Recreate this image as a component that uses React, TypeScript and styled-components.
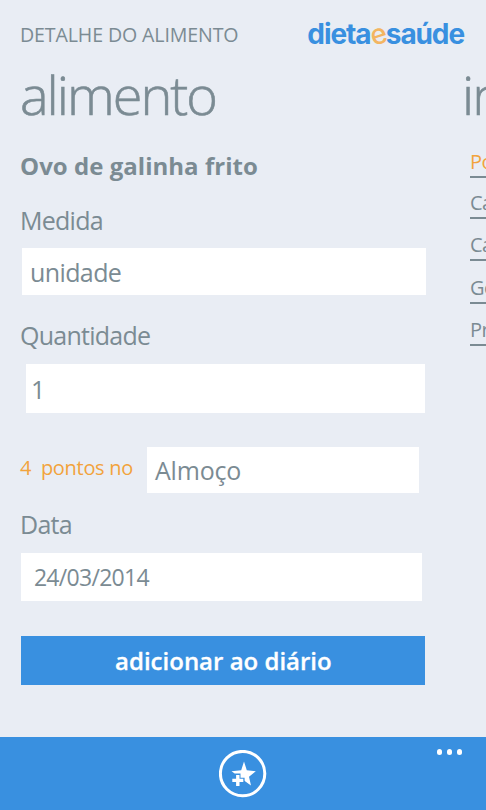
import React from "react";
import styled, { createGlobalStyle } from "styled-components";

const slate = "#7b8b93";
const blue = "#3990e0";
const orange = "#f2a33c";

const GlobalStyle = createGlobalStyle`
  * { box-sizing: border-box; }
  body { margin: 0; background: #e9edf4; }
`;

const Screen = styled.div`
  width: 486px;
  height: 810px;
  display: flex;
  flex-direction: column;
  overflow: hidden;
  background: #e9edf4;
  color: ${slate};
  font-family: "Open Sans", "Noto Sans", sans-serif;
  white-space: nowrap;
`;

const Header = styled.header`
  flex: none;
  height: 70px;
  padding: 0 22px 0 20px;
  display: flex;
  justify-content: space-between;
`;

const PageName = styled.span`
  font-size: 19.6px;
  line-height: 70px;
  letter-spacing: -0.13px;
`;

const Logo = styled.div`
  font-family: Inter, sans-serif;
  font-weight: 700;
  font-size: 28px;
  line-height: 68px;
  letter-spacing: -1.1px;
  color: ${blue};
`;

const LogoAccent = styled.span`
  display: inline-block;
  line-height: 1;
  font-weight: 500;
  transform: rotate(-18deg);
  color: #f3b562;
`;

const Panorama = styled.main`
  flex: 1;
  min-height: 0;
  display: flex;
`;

const Panel = styled.section<{ $width: number; $inset?: number }>`
  flex: none;
  width: ${(p) => p.$width}px;
  padding-left: ${(p) => p.$inset ?? 0}px;
`;

const PanelTitle = styled.h1`
  margin: 0;
  font-size: 54px;
  font-weight: 300;
  line-height: 48px;
  letter-spacing: -2px;
  -webkit-text-stroke: 0.6px ${slate};
`;

const FoodName = styled.h2`
  margin: 18px 0 0;
  font-size: 24px;
  font-weight: 700;
  line-height: 60px;
  letter-spacing: 0.03px;
`;

const Label = styled.label<{ $top?: number }>`
  display: block;
  margin-top: ${(p) => p.$top ?? 0}px;
  font-size: 25px;
  line-height: 49px;
  height: 48px;
  letter-spacing: -0.75px;
`;

const Field = styled.div<{
  $width: number;
  $height: number;
  $top?: number;
  $left?: number;
  $pad: number;
  $size?: number;
  $spacing?: number;
}>`
  flex: none;
  width: ${(p) => p.$width}px;
  height: ${(p) => p.$height}px;
  margin: ${(p) => p.$top ?? 0}px 0 0 ${(p) => p.$left ?? 0}px;
  padding-left: ${(p) => p.$pad}px;
  background: #fff;
  font-size: ${(p) => p.$size ?? 25}px;
  line-height: ${(p) => p.$height + 1}px;
  letter-spacing: ${(p) => p.$spacing ?? 0}px;
`;

const MealRow = styled.div`
  display: flex;
  margin-top: 34px;
`;

const Points = styled.div`
  width: 127px;
  font-size: 20px;
  line-height: 42px;
  letter-spacing: -0.3px;
  color: ${orange};
  white-space: pre;
`;

const AddButton = styled.button`
  display: block;
  width: 404px;
  height: 49px;
  margin: 35px 0 0 1.4px;
  padding: 0;
  border: 0;
  background: ${blue};
  color: #fff;
  font: 600 24px/49px "Open Sans", "Noto Sans", sans-serif;
  -webkit-text-stroke: 0.3px #fff;
`;

const NutrientList = styled.ul`
  margin: 26px 0 0;
  padding: 0 0 0 8px;
  list-style: none;
`;

const Nutrient = styled.li<{ $height: number; $accent?: boolean }>`
  height: ${(p) => p.$height}px;
  display: flex;
  align-items: flex-end;
  border-bottom: 2px solid ${slate};
  color: ${(p) => (p.$accent ? orange : slate)};
  font-size: 20px;
  line-height: 28px;
  letter-spacing: -0.5px;
`;

const AppBar = styled.footer`
  flex: none;
  height: 73px;
  display: grid;
  grid-template-columns: 1fr 48px 1fr;
  background: ${blue};
`;

const RoundButton = styled.button`
  grid-column: 2;
  width: 48px;
  height: 48px;
  margin-top: 12.5px;
  padding: 0;
  border: 0;
  background: none;
`;

const MoreButton = styled.button`
  justify-self: end;
  align-self: start;
  display: flex;
  gap: 4.5px;
  margin: 12px 24px 0 0;
  padding: 0;
  border: 0;
  background: none;
`;

const Dot = styled.i`
  width: 5.5px;
  height: 5.5px;
  border-radius: 50%;
  background: #fff;
`;

const nutrients = [
  { name: "Po", height: 34, accent: true },
  { name: "Ca", height: 41 },
  { name: "Ca", height: 42 },
  { name: "Go", height: 43 },
  { name: "Pr", height: 42 },
];

export default function App() {
  return (
    <>
      <GlobalStyle />
      <Screen>
        <Header>
          <PageName>DETALHE DO ALIMENTO</PageName>
          <Logo>
            dieta<LogoAccent>e</LogoAccent>saúde
          </Logo>
        </Header>
        <Panorama>
          <Panel $width={462} $inset={20}>
            <PanelTitle>alimento</PanelTitle>
            <FoodName>Ovo de galinha frito</FoodName>
            <Label>Medida</Label>
            <Field $width={404.4} $height={47} $top={4} $left={2} $pad={8} $spacing={-0.6}>unidade</Field>
            <Label $top={16}>Quantidade</Label>
            <Field $width={399} $height={49} $top={5} $left={6} $pad={5}>1</Field>
            <MealRow>
              <Points>4  pontos no</Points>
              <Field $width={272.4} $height={46} $pad={8} $spacing={-0.2}>Almoço</Field>
            </MealRow>
            <Label $top={7}>Data</Label>
            <Field $width={400.6} $height={48} $top={5} $left={1.4} $pad={12.5} $size={23} $spacing={-0.7}>24/03/2014</Field>
            <AddButton>adicionar ao diário</AddButton>
          </Panel>
          <Panel $width={400}>
            <PanelTitle>in</PanelTitle>
            <NutrientList>
              {nutrients.map((n, i) => (
                <Nutrient key={i} $height={n.height} $accent={n.accent}>
                  {n.name}
                </Nutrient>
              ))}
            </NutrientList>
          </Panel>
        </Panorama>
        <AppBar>
          <RoundButton aria-label="Adicionar aos favoritos">
            <svg width="48" height="48" viewBox="0 0 48 48">
              <circle cx="23.6" cy="23.6" r="22.2" fill="none" stroke="#fff" strokeWidth="3" />
              <path
                d="M25 11.5L27.8 20.2L36.8 21.2L30 26.8L32 35.5L25 30.5L18.5 34.5L20 26.5L12.5 21.2L22.2 20.2Z"
                fill="#fff"
              />
              <path d="M18.8 23.6v13.6M12 30.4h13.6" stroke={blue} strokeWidth="5.4" />
              <path d="M18.8 24.9v11M13.3 30.4h11" stroke="#fff" strokeWidth="3.4" />
            </svg>
          </RoundButton>
          <MoreButton aria-label="Mais">
            <Dot />
            <Dot />
            <Dot />
          </MoreButton>
        </AppBar>
      </Screen>
    </>
  );
}
